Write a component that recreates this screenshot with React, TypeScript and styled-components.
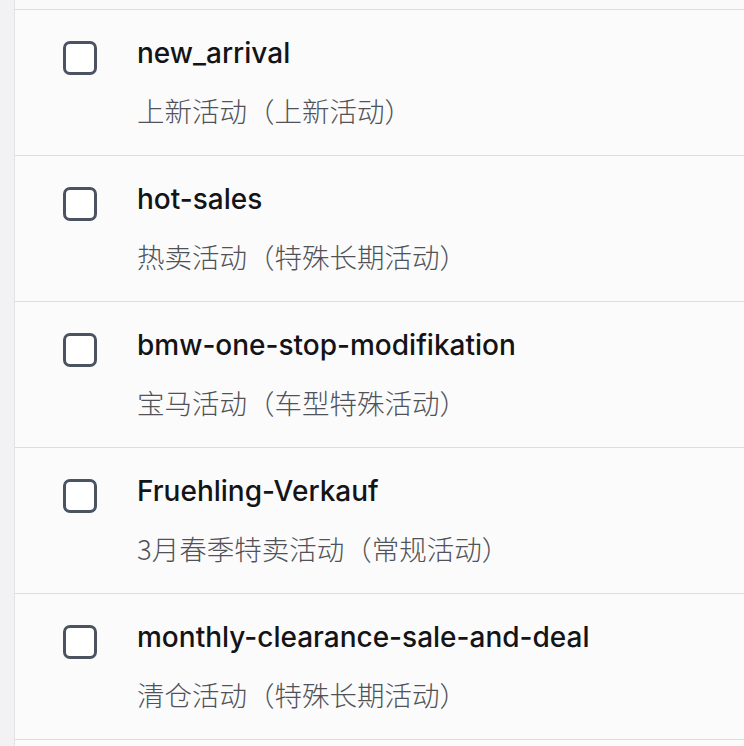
import React from "react";
import styled, { createGlobalStyle } from "styled-components";

const Global = createGlobalStyle`
  html, body { margin: 0; padding: 0; background: #fafafb; }
  body { font-family: Inter, "Noto Sans CJK SC", sans-serif; }
`;

const Page = styled.div`
  display: flex;
  width: 744px;
  height: 746px;
  overflow: hidden;
  background: #fafafb;
`;

const Rail = styled.div`
  width: 14px;
  flex: none;
  background: #f2f2f4;
  border-right: 1px solid #e3e3e6;
`;

const List = styled.div`
  flex: 1;
  padding-top: 9px;
  display: flex;
  flex-direction: column;
`;

const Row = styled.div`
  display: flex;
  flex: none;
  align-items: flex-start;
  gap: 40px;
  height: 146px;
  box-sizing: border-box;
  padding: 28px 0 0 48px;
  border-top: 1px solid #dedee1;
  background: #fbfbfc;
`;

const Box = styled.div`
  width: 34px;
  height: 34px;
  box-sizing: border-box;
  border: 3px solid #4b5260;
  border-radius: 7px;
  background: #fff;
  flex: none;
  margin-top: 3px;
`;

const Texts = styled.div`
  display: flex;
  flex-direction: column;
  gap: 24px;
`;

const Title = styled.div`
  font-family: Inter, sans-serif;
  font-weight: 500;
  font-size: 28px;
  line-height: 30px;
  color: #141417;
`;

const Sub = styled.div`
  font-family: "Noto Sans CJK SC", sans-serif;
  font-weight: 300;
  font-size: 27.5px;
  line-height: 36px;
  color: #505257;
`;

const items = [
  ["new_arrival", "上新活动（上新活动）"],
  ["hot-sales", "热卖活动（特殊长期活动）"],
  ["bmw-one-stop-modifikation", "宝马活动（车型特殊活动）"],
  ["Fruehling-Verkauf", "3月春季特卖活动（常规活动）"],
  ["monthly-clearance-sale-and-deal", "清仓活动（特殊长期活动）"],
  ["", ""],
];

export default function App() {
  return (
    <Page>
      <Global />
      <Rail />
      <List>
        {items.map(([t, s], i) => (
          <Row key={i}>
            {t && <Box />}
            {t && (
              <Texts>
                <Title>{t}</Title>
                <Sub>{s}</Sub>
              </Texts>
            )}
          </Row>
        ))}
      </List>
    </Page>
  );
}
